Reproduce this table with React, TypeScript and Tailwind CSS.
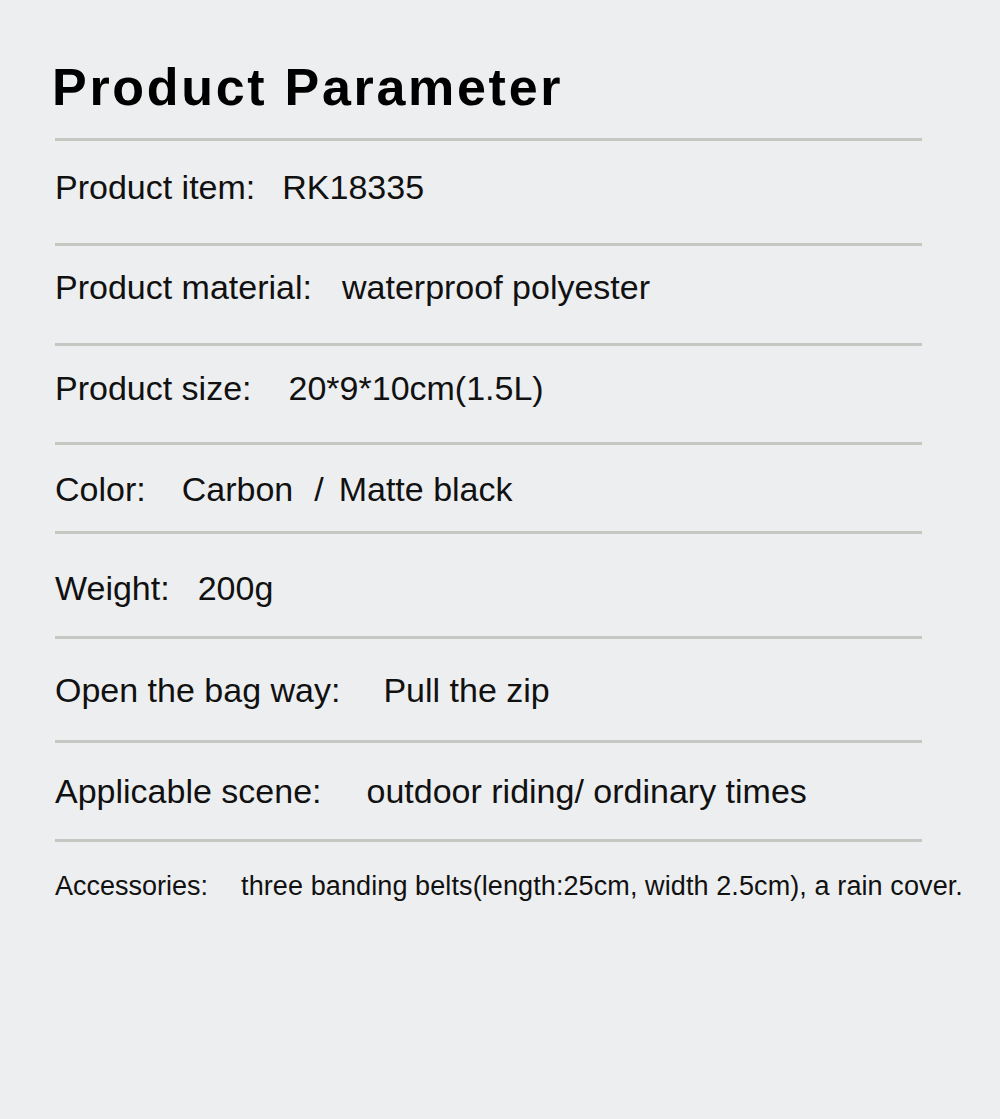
import React from 'react'

type Row = {
  label: string
  values: { text: string; gap: string }[]
  space: string
}

// label / value rows, spacing taken per row from the reference
const ROWS: Row[] = [
  {
    label: 'Product item:',
    values: [{ text: 'RK18335', gap: 'ml-[27px]' }],
    space: 'pt-[29px] pb-[39px]',
  },
  {
    label: 'Product material:',
    values: [{ text: 'waterproof polyester', gap: 'ml-[30px]' }],
    space: 'pt-[24px] pb-[39px]',
  },
  {
    label: 'Product size:',
    values: [{ text: '20*9*10cm(1.5L)', gap: 'ml-[37px]' }],
    space: 'pt-[25px] pb-[37px]',
  },
  {
    label: 'Color:',
    values: [
      { text: 'Carbon', gap: 'ml-[36px]' },
      { text: '/', gap: 'ml-[21px]' },
      { text: 'Matte black', gap: 'ml-[15px]' },
    ],
    space: 'pt-[27px] pb-[25px]',
  },
  {
    label: 'Weight:',
    values: [{ text: '200g', gap: 'ml-[28px]' }],
    space: 'pt-[37px] pb-[31px]',
  },
  {
    label: 'Open the bag way:',
    values: [{ text: 'Pull the zip', gap: 'ml-[43px]' }],
    space: 'pt-[34px] pb-[33px]',
  },
  {
    label: 'Applicable scene:',
    values: [{ text: 'outdoor riding/ ordinary times', gap: 'ml-[45px]' }],
    space: 'pt-[31px] pb-[31px]',
  },
]

function Divider() {
  return <div className="h-[3px] w-[867px] bg-[#c5c7c3]" />
}

export default function App() {
  return (
    <div className="min-h-screen bg-[#edeef0] pl-[55px] font-['Liberation_Sans',Arial,sans-serif]">
      {/* Header */}
      <h1 className="-ml-[3px] pt-[61px] pb-[25px] text-[52px] font-bold leading-[52px] tracking-[2.7px] text-black">
        Product Parameter
      </h1>

      {ROWS.map((row) => (
        <div key={row.label}>
          <Divider />
          <div className={`flex whitespace-nowrap text-[34px] leading-[34px] text-[#111] ${row.space}`}>
            <span>{row.label}</span>
            {row.values.map((v) => (
              <span key={v.text} className={v.gap}>
                {v.text}
              </span>
            ))}
          </div>
        </div>
      ))}

      <Divider />
      <div className="flex whitespace-nowrap pt-[31px] text-[27px] leading-[27px] text-[#111]">
        <span>Accessories:</span>
        <span className="ml-[33px] tracking-[0.1px]">
          three banding belts(length:25cm, width 2.5cm), a rain cover.
        </span>
      </div>
    </div>
  )
}
